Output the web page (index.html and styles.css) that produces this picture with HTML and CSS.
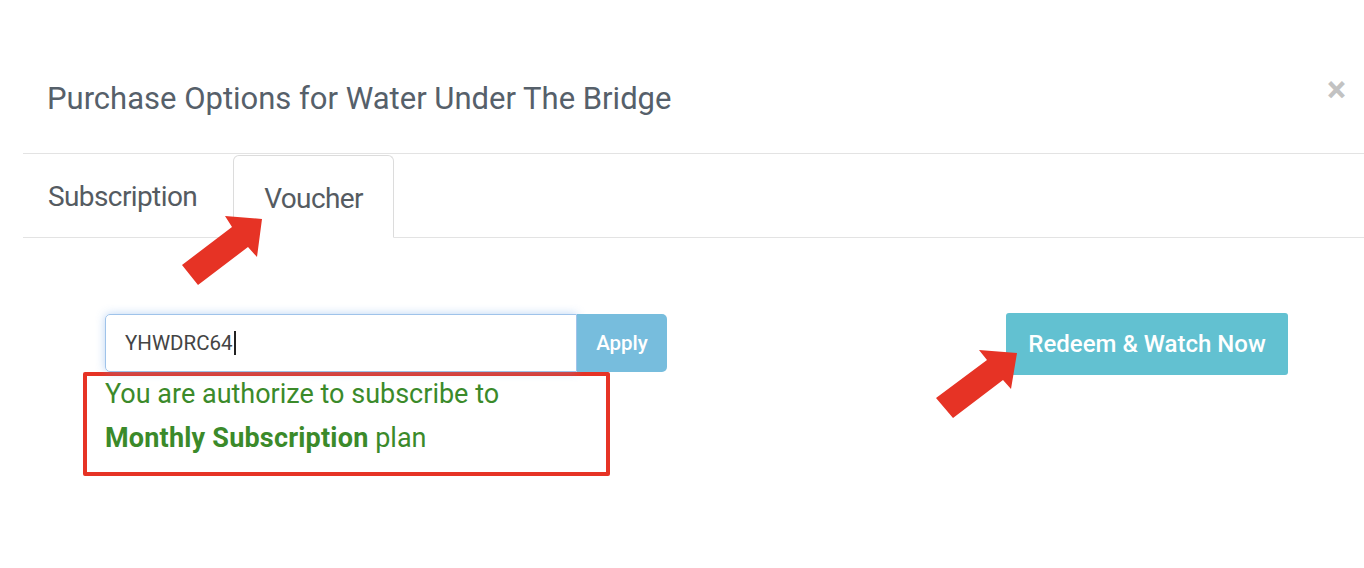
FILE: index.html
```html
<!DOCTYPE html>
<html>
<head>
<meta charset="utf-8">
<link rel="stylesheet" href="styles.css">
</head>
<body>
<div class="modal">
  <div class="modal-header">
    <h4 class="modal-title">Purchase Options for Water Under The Bridge</h4>
    <span class="close">&times;</span>
  </div>
  <ul class="tabs">
    <li class="tab">Subscription</li>
    <li class="tab active">Voucher</li>
  </ul>
  <div class="modal-body">
    <div class="voucher-col">
      <div class="input-group">
        <div class="input">YHWDRC64<span class="caret"></span></div>
        <div class="apply">Apply</div>
      </div>
      <div class="message">
        <p>You are authorize to subscribe to</p>
        <p><strong>Monthly Subscription</strong> plan</p>
      </div>
    </div>
    <div class="redeem">Redeem &amp; Watch Now</div>
  </div>
</div>
<svg class="arrow arrow-tab" width="100" height="100" viewBox="0 0 100 100">
  <polygon points="82,19 45,16 52,27 2,65 18,85 68,47 77,57" fill="#e63325"/>
</svg>
<svg class="arrow arrow-btn" width="100" height="100" viewBox="0 0 100 100">
  <polygon points="97,23 59,20 67,30 16,68 33,88 83,50 91,59" fill="#e63325"/>
</svg>
</body>
</html>
```

FILE: styles.css
```css
html, body {
  margin: 0;
  padding: 0;
  background: #fff;
}
body {
  font-family: Roboto, "Noto Sans", sans-serif;
  position: relative;
  width: 1364px;
  height: 568px;
  overflow: hidden;
}
.modal {
  padding-left: 23px;
  padding-top: 0;
}
.modal-header {
  height: 154px;
  border-bottom: 1px solid #e3e3e3;
  display: flex;
  align-items: flex-start;
  justify-content: space-between;
  box-sizing: border-box;
  padding: 0 18px 0 24px;
}
.modal-title {
  margin: 80px 0 0;
  font-size: 31px;
  font-weight: 400;
  color: #56606a;
  line-height: 38px;
}
.close {
  margin-top: 72px;
  font-size: 36px;
  font-weight: 700;
  color: #c2c2c2;
  line-height: 36px;
}
.tabs {
  list-style: none;
  margin: 0;
  padding: 0;
  display: flex;
  height: 84px;
  border-bottom: 1px solid #e3e3e3;
  box-sizing: border-box;
}
.tab {
  font-size: 28px;
  letter-spacing: -0.6px;
  color: #555b61;
  padding: 3px 36px 0 25px;
  line-height: 79px;
}
.tab.active {
  padding: 3px 30px 0;
  border: 1px solid #dcdcdc;
  border-bottom-color: #fff;
  border-radius: 6px 6px 0 0;
  margin-bottom: -1px;
  margin-top: 1px;
  background: #fff;
}
.modal-body {
  display: flex;
  justify-content: space-between;
  padding: 76px 76px 0 60px;
}
.voucher-col {
  width: 527px;
}
.input-group {
  display: flex;
  margin-left: 22px;
  height: 58px;
  width: 562px;
  border-radius: 5px;
}
.input {
  flex: 1;
  border: 1px solid #9fc3ea;
  border-radius: 5px 0 0 5px;
  box-shadow: 0 0 10px rgba(102, 160, 230, 0.45);
  font-size: 20.5px;
  color: #444;
  padding-left: 19px;
  line-height: 56px;
  display: flex;
  align-items: center;
}
.caret {
  display: inline-block;
  width: 2px;
  height: 24px;
  background: #222;
  margin-left: 1px;
}
.apply {
  width: 90px;
  background: #77bddd;
  border-radius: 0 5px 5px 0;
  color: #fff;
  font-size: 20.5px;
  font-weight: 500;
  display: flex;
  align-items: center;
  justify-content: center;
}
.message {
  border: 4px solid #e63325;
  border-radius: 2px;
  height: 104px;
  box-sizing: border-box;
  padding: 0 0 0 18px;
  color: #3b8a2a;
  font-size: 27px;
}
.message p {
  margin: 0;
  line-height: 44px;
}
.message p:first-child {
  margin-top: -4px;
}
.message strong {
  font-weight: 700;
  letter-spacing: 0.2px;
}
.redeem {
  margin-top: -1px;
  height: 62px;
  width: 282px;
  background: #62c1d1;
  border-radius: 3px;
  color: #fff;
  font-size: 24px;
  font-weight: 500;
  display: flex;
  align-items: center;
  justify-content: center;
}
.arrow {
  position: absolute;
}
.arrow-tab {
  left: 180px;
  top: 200px;
}
.arrow-btn {
  left: 920px;
  top: 330px;
}
```
